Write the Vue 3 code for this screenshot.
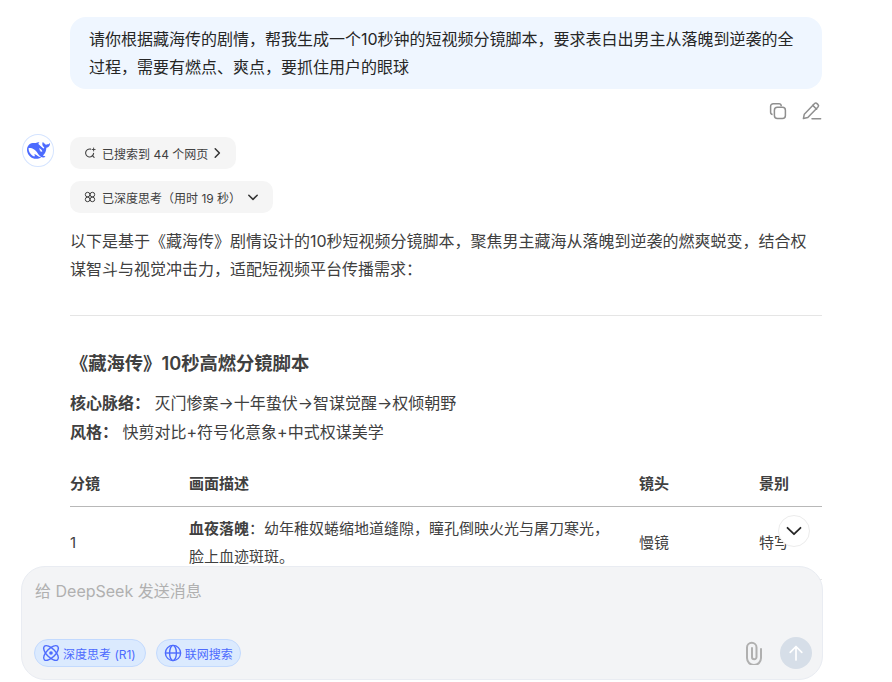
<template>
  <div class="page">
    <div class="chat">
      <div class="user-msg">
        <div class="bubble">请你根据藏海传的剧情，帮我生成一个10秒钟的短视频分镜脚本，要求表白出男主从落魄到逆袭的全过程，需要有燃点、爽点，要抓住用户的眼球</div>
        <div class="msg-actions">
          <svg width="20" height="20" viewBox="0 0 20 20" fill="none" stroke="#8f8f8f" stroke-width="1.5">
            <path d="M13.2 5.2V4.8a2.2 2.2 0 0 0-2.2-2H5.2A2.6 2.6 0 0 0 2.6 5.4v5.8a2.2 2.2 0 0 0 2 2.2" />
            <rect x="6.4" y="6.2" width="11" height="11.4" rx="3" />
          </svg>
          <svg width="20" height="20" viewBox="0 0 20 20" fill="none" stroke="#8f8f8f" stroke-width="1.5" stroke-linejoin="round" stroke-linecap="round">
            <path d="M1.4 17.6l.9-4.4L12.6 2.6a1.7 1.7 0 0 1 2.4 0l1 1a1.7 1.7 0 0 1 0 2.4L5.8 16.6z" />
            <path d="M10.8 4.4l3.8 3.8" />
            <path d="M10 17.8h8.6" />
          </svg>
        </div>
      </div>

      <div class="bot-msg">
        <div class="avatar">
          <svg width="23" height="23" viewBox="0 0 24 24" fill="#4d6bfe">
            <path d="M23.748 4.482c-.254-.124-.364.113-.512.234-.051.039-.094.09-.137.136-.372.397-.806.657-1.373.626-.829-.046-1.537.214-2.163.848-.133-.782-.575-1.248-1.247-1.548-.352-.156-.708-.311-.955-.65-.172-.241-.219-.51-.305-.774-.055-.16-.11-.323-.293-.35-.2-.031-.278.136-.356.276-.313.572-.434 1.202-.422 1.84.027 1.436.633 2.58 1.838 3.393.137.093.172.187.129.323-.082.28-.18.552-.266.833-.055.179-.137.217-.329.14a5.526 5.526 0 01-1.736-1.18c-.857-.828-1.631-1.742-2.597-2.458a11.365 11.365 0 00-.689-.471c-.985-.957.13-1.743.388-1.836.27-.098.093-.432-.779-.428-.872.004-1.67.295-2.687.684a3.055 3.055 0 01-.465.137 9.597 9.597 0 00-2.883-.102c-1.885.21-3.39 1.102-4.497 2.623C.082 8.606-.231 10.684.152 12.85c.403 2.284 1.569 4.175 3.36 5.653 1.858 1.533 3.997 2.284 6.438 2.14 1.482-.085 3.133-.284 4.994-1.86.47.234.962.327 1.78.397.63.059 1.236-.03 1.705-.128.735-.156.684-.837.419-.961-2.155-1.004-1.682-.595-2.113-.926 1.096-1.296 2.746-2.642 3.392-7.003.05-.347.007-.565 0-.845-.004-.17.035-.237.23-.256a4.173 4.173 0 001.545-.475c1.396-.763 1.96-2.015 2.093-3.517.02-.23-.004-.467-.247-.588zM11.581 18c-2.089-1.642-3.102-2.183-3.52-2.16-.392.024-.321.471-.235.763.09.288.207.486.371.739.114.167.192.416-.113.603-.673.416-1.842-.14-1.897-.167-1.361-.802-2.5-1.86-3.301-3.307-.774-1.393-1.224-2.887-1.298-4.482-.02-.386.093-.522.477-.592a4.696 4.696 0 011.529-.039c2.132.312 3.946 1.265 5.468 2.774.868.86 1.525 1.887 2.202 2.891.72 1.066 1.494 2.082 2.48 2.914.348.292.625.514.891.677-.802.09-2.14.11-3.054-.614zm1-6.44a.306.306 0 01.415-.287.302.302 0 01.2.288.306.306 0 01-.31.307.303.303 0 01-.304-.308zm3.11 1.596c-.2.081-.399.151-.59.16a1.245 1.245 0 01-.798-.254c-.274-.23-.47-.358-.552-.758a1.73 1.73 0 01.016-.588c.07-.327-.008-.537-.239-.727-.187-.156-.426-.199-.688-.199a.559.559 0 01-.254-.078c-.11-.054-.2-.19-.114-.358.028-.054.16-.186.192-.21.356-.202.767-.136 1.146.016.352.144.618.408 1.001.782.391.451.462.576.685.914.176.265.336.537.445.848.067.195-.019.354-.25.452z" />
          </svg>
        </div>

        <div class="answer">
          <div class="pill pill-search">
            <svg class="pill-icon" width="12" height="12" viewBox="0 0 12 12" fill="none" stroke="#404040" stroke-width="1.1" stroke-linecap="round">
              <path d="M6.6 2.1A4 4 0 1 0 9.6 6.4" />
              <path d="M8.2 8.4l1.9 1.9" />
              <path d="M9.6 1v3M8.1 2.5h3" stroke-width="0.9" />
            </svg>
            <span>已搜索到 44 个网页</span>
            <svg class="pill-arrow" width="12" height="12" viewBox="0 0 12 12" fill="none" stroke="#333" stroke-width="1.5" stroke-linecap="round" stroke-linejoin="round">
              <path d="M4.2 1.8L8.4 6l-4.2 4.2" />
            </svg>
          </div>
          <div class="pill pill-think">
            <svg class="pill-icon" width="12" height="12" viewBox="0 0 12 12" fill="none" stroke="#404040" stroke-width="1">
              <circle cx="3.6" cy="3.6" r="2.3" />
              <circle cx="8.4" cy="3.6" r="2.3" />
              <circle cx="3.6" cy="8.4" r="2.3" />
              <circle cx="8.4" cy="8.4" r="2.3" />
            </svg>
            <span>已深度思考（用时 19 秒）</span>
            <svg class="pill-arrow" width="12" height="12" viewBox="0 0 12 12" fill="none" stroke="#333" stroke-width="1.5" stroke-linecap="round" stroke-linejoin="round">
              <path d="M1.8 4.2L6 8.4l4.2-4.2" />
            </svg>
          </div>

          <p class="intro">以下是基于《藏海传》剧情设计的10秒短视频分镜脚本，聚焦男主藏海从落魄到逆袭的燃爽蜕变，结合权谋智斗与视觉冲击力，适配短视频平台传播需求：</p>
          <hr class="divider" />
          <h3 class="title">《藏海传》10秒高燃分镜脚本</h3>
          <p class="meta"><strong>核心脉络：</strong> 灭门惨案→十年蛰伏→智谋觉醒→权倾朝野</p>
          <p class="meta"><strong>风格：</strong> 快剪对比+符号化意象+中式权谋美学</p>

          <table class="script-table">
            <colgroup>
              <col class="col-no" />
              <col class="col-desc" />
              <col class="col-lens" />
              <col class="col-view" />
            </colgroup>
            <thead>
              <tr>
                <th>分镜</th>
                <th>画面描述</th>
                <th>镜头</th>
                <th>景别</th>
              </tr>
            </thead>
            <tbody>
              <tr v-for="row in rows" :key="row.no">
                <td>{{ row.no }}</td>
                <td><strong>{{ row.head }}</strong>：{{ row.desc }}</td>
                <td>{{ row.lens }}</td>
                <td>{{ row.view }}</td>
              </tr>
            </tbody>
          </table>
        </div>
      </div>
    </div>

    <button class="scroll-btn">
      <svg width="18" height="18" viewBox="0 0 18 18" fill="none" stroke="#262626" stroke-width="1.8" stroke-linecap="round" stroke-linejoin="round">
        <path d="M2.5 5.8L9 12.2l6.5-6.4" />
      </svg>
    </button>

    <div class="composer">
      <div class="placeholder">给 DeepSeek 发送消息</div>
      <div class="composer-bar">
        <div class="chip chip-think">
          <svg width="20" height="20" viewBox="0 0 20 20" fill="none" stroke="#4d6bfe" stroke-width="1.4">
            <ellipse cx="10" cy="10" rx="9.4" ry="4.4" transform="rotate(45 10 10)" />
            <ellipse cx="10" cy="10" rx="9.4" ry="4.4" transform="rotate(-45 10 10)" />
            <circle cx="10" cy="10" r="1.8" fill="#4d6bfe" stroke="none" />
          </svg>
          <span>深度思考 (R1)</span>
        </div>
        <div class="chip">
          <svg width="20" height="20" viewBox="0 0 20 20" fill="none" stroke="#4d6bfe" stroke-width="1.4">
            <circle cx="10" cy="10" r="7.6" />
            <ellipse cx="10" cy="10" rx="3.4" ry="7.6" />
            <path d="M2.4 10h15.2" />
          </svg>
          <span>联网搜索</span>
        </div>
        <div class="bar-right">
          <svg width="20" height="24" viewBox="0 0 20 24" fill="none" stroke="#b0b0b0" stroke-width="2" stroke-linecap="round">
            <path d="M17 8v9a7 7 0 0 1-14 0V6.5a4.75 4.75 0 0 1 9.5 0V16a2.25 2.25 0 0 1-4.5 0V7" />
          </svg>
          <div class="send">
            <svg width="18" height="18" viewBox="0 0 18 18" fill="none" stroke="#fff" stroke-width="1.7" stroke-linecap="round" stroke-linejoin="round">
              <path d="M9 16V2.5M3.2 8.3L9 2.5l5.8 5.8" />
            </svg>
          </div>
        </div>
      </div>
    </div>
  </div>
</template>

<script setup>
const rows = [
  {
    no: 1,
    head: '血夜落魄',
    desc: '幼年稚奴蜷缩地道缝隙，瞳孔倒映火光与屠刀寒光，脸上血迹斑斑。',
    lens: '慢镜',
    view: '特写'
  }
]
</script>

<style>
html,
body {
  margin: 0;
  background: #fff;
}
</style>

<style scoped>
.page {
  position: relative;
  width: 892px;
  height: 682px;
  overflow: hidden;
  background: #fff;
  color: #404040;
  font-family: "Inter", "Noto Sans CJK SC", sans-serif;
  font-size: 16px;
}

.chat {
  width: 800px;
  margin-left: 22px;
  padding-top: 17px;
}

.user-msg {
  margin-left: 48px;
}

.bubble {
  padding: 8px 20px 8px 19px;
  background: #eff6ff;
  border-radius: 16px;
  color: #262626;
  line-height: 28px;
}

.msg-actions {
  display: flex;
  justify-content: flex-end;
  gap: 14px;
  height: 20px;
  margin-top: 12px;
}

.bot-msg {
  display: flex;
  align-items: flex-start;
  gap: 16px;
  margin-top: 16px;
}

.avatar {
  flex: none;
  box-sizing: border-box;
  display: flex;
  align-items: center;
  justify-content: center;
  width: 32px;
  height: 33px;
  margin-top: -3px;
  border: 1px solid #d5e4ff;
  border-radius: 50%;
}

.answer {
  flex: 1;
  min-width: 0;
}

.pill {
  display: flex;
  align-items: center;
  width: fit-content;
  height: 32px;
  padding: 0 14px;
  background: #f5f5f5;
  border-radius: 10px;
  font-size: 12px;
  color: #404040;
}

.pill-search {
  padding-right: 13px;
}

.pill-think {
  margin-top: 12px;
}

.pill-icon {
  margin-right: 6px;
}

.pill-arrow {
  margin-left: 3px;
}

.pill-think .pill-arrow {
  margin-left: 6px;
}

.intro {
  margin: 14px 0 0;
  line-height: 28px;
}

.divider {
  height: 1px;
  margin: 32px 0 0;
  border: 0;
  background: #e5e5e5;
}

.title {
  margin: 33px 0 0;
  font-size: 18.3px;
  line-height: 28px;
  font-weight: 600;
}

.meta {
  margin: 0;
  line-height: 29px;
}

.title + .meta {
  margin-top: 12px;
}

.meta strong {
  font-weight: 600;
}

.script-table {
  width: 752px;
  margin-top: 11px;
  border-collapse: collapse;
  table-layout: fixed;
  font-size: 15px;
}

.col-no {
  width: 119px;
}

.col-lens {
  width: 120px;
}

.col-desc {
  width: 450px;
}

.script-table th {
  height: 48px;
  padding: 0;
  text-align: left;
  font-weight: 600;
  border-bottom: 1px solid #b8b8b8;
}

.script-table td {
  padding: 8px 24px 8px 0;
  line-height: 28px;
  border-bottom: 1px solid #e5e5e5;
}

.script-table td strong {
  font-weight: 600;
}

.scroll-btn {
  position: absolute;
  left: 778px;
  top: 515px;
  display: flex;
  align-items: center;
  justify-content: center;
  width: 32px;
  height: 32px;
  padding: 0;
  background: #fff;
  border: 1px solid #ececec;
  border-radius: 50%;
}

.composer {
  position: absolute;
  left: 21px;
  top: 566px;
  display: flex;
  flex-direction: column;
  box-sizing: border-box;
  width: 802px;
  height: 114px;
  padding: 12px 10px 10px 12px;
  background: #f3f4f6;
  border: 1px solid #e9ecf2;
  border-radius: 24px;
}

.placeholder {
  padding-left: 1px;
  line-height: 24px;
  color: #b0b0b0;
}

.composer-bar {
  display: flex;
  align-items: center;
  gap: 10px;
  margin-top: auto;
}

.chip {
  display: flex;
  align-items: center;
  gap: 2px;
  box-sizing: border-box;
  height: 28px;
  padding: 0 7px 0 6px;
  background: #dbeafe;
  border: 1px solid #c3dafe;
  border-radius: 14px;
  font-size: 12px;
  color: #4d6bfe;
}

.chip-think {
  padding-right: 9px;
}

.bar-right {
  display: flex;
  align-items: center;
  gap: 16px;
  margin-left: auto;
}

.send {
  display: flex;
  align-items: center;
  justify-content: center;
  width: 32px;
  height: 32px;
  background: #d6dee8;
  border-radius: 50%;
}
</style>
